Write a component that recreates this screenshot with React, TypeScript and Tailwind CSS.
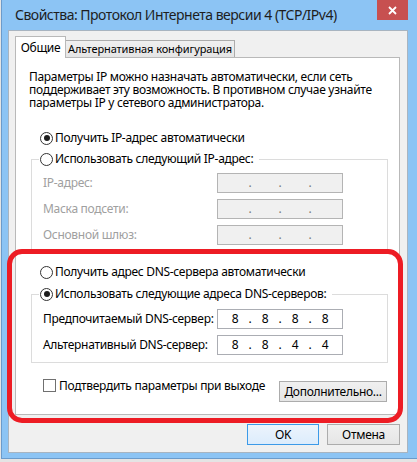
import React from "react";

// Windows 8 "IPv4 properties" dialog with a red marker drawn round the DNS part.

const UI = "font-['Segoe_UI','Noto_Sans',sans-serif] tracking-[-0.3px]";

function Radio({ checked, label }: { checked?: boolean; label: string }) {
  return (
    <div className="flex h-[16px] items-center">
      <span className="flex h-[13px] w-[13px] shrink-0 items-center justify-center rounded-full border border-[#333333] bg-white">
        {checked ? <span className="h-[6px] w-[6px] rounded-full bg-[#1c1c1c]" /> : null}
      </span>
      <span className="ml-[2px] whitespace-nowrap text-[12px] leading-[16px] text-black">{label}</span>
    </div>
  );
}

function IpBox({ value, disabled }: { value?: string[]; disabled?: boolean }) {
  const segs = value ?? ["", "", "", ""];
  return (
    <div
      className={
        disabled
          ? "flex h-[20px] w-[126px] items-center border border-[#b4b4b4] bg-[#f0f0f0] pl-[5px] text-[12px] leading-[18px] text-[#7a7a7a]"
          : "flex h-[20px] w-[126px] items-center border border-[#abadb3] bg-white pl-[5px] text-[12px] leading-[18px] text-black"
      }
    >
      {segs.map((s, i) => (
        <React.Fragment key={i}>
          <span className="w-[24px] text-center">{s}</span>
          {i < 3 ? <span className="w-[6px] text-center">.</span> : null}
        </React.Fragment>
      ))}
    </div>
  );
}

function Row({ label, value, disabled }: { label: string; value?: string[]; disabled?: boolean }) {
  return (
    <div className="flex items-center pl-[11px]">
      <span
        className={
          disabled
            ? "w-[174px] whitespace-nowrap text-[12px] leading-[16px] text-[#a0a0a0]"
            : "w-[174px] whitespace-nowrap text-[12px] leading-[16px] text-black"
        }
      >
        {label}
      </span>
      <IpBox value={value} disabled={disabled} />
    </div>
  );
}

function Button({ children, width, primary }: { children: React.ReactNode; width: string; primary?: boolean }) {
  return (
    <div
      className={`flex h-[21px] items-center justify-center whitespace-nowrap border text-[12px] text-black ${width} ${
        primary
          ? "border-[#3c9ae8] bg-[linear-gradient(#ecf4fc,#dcecfc)]"
          : "border-[#acacac] bg-[linear-gradient(#f0f0f0,#e5e5e5)]"
      }`}
    >
      {children}
    </div>
  );
}

export default function App() {
  return (
    <div className={`relative h-[462px] w-[417px] overflow-hidden bg-[#e4e4e4] ${UI}`}>
      <div className="ml-[1px] h-[459px] border-b border-l border-[#6b9bcb] bg-[#8cc4f4]">
        {/* title bar */}
        <div className="flex h-[30px]">
          <span className="whitespace-nowrap pl-[13px] text-[14px] leading-[30px] tracking-[-0.5px] text-[#1e1e1e]">
            Свойства: Протокол Интернета версии 4 (TCP/IPv4)
          </span>
          <div className="ml-auto mr-[9px] flex h-[20px] w-[31px] items-center justify-center bg-[#c75050]">
            <svg width="9" height="9" viewBox="0 0 9 9">
              <path d="M1 1 L8 8 M8 1 L1 8" stroke="#ffffff" strokeWidth="1.8" />
            </svg>
          </div>
        </div>

        {/* client area */}
        <div className="ml-[6px] mr-[9px] h-[423px] border border-[#a8b4c0] bg-[#f0f0f0] pl-[6px] pr-[7px] pt-[5px]">
          <div className="flex h-[21px] items-end">
            <div className="relative z-10 -mb-px flex h-[22px] w-[51px] items-center justify-center whitespace-nowrap border-l border-r border-t border-[#b9b9b9] bg-white pt-[1px] text-[12px] text-black">
              Общие
            </div>
            <div className="-ml-px flex h-[17px] w-[170px] items-center justify-center whitespace-nowrap border-l border-r border-t border-[#acacac] bg-[linear-gradient(#f0f0f0,#e5e5e5)] text-[11px] tracking-[-0.1px] text-black">
              Альтернативная конфигурация
            </div>
          </div>

          <div className="h-[358px] border border-[#b9b9b9] bg-white">
            <p className="pl-[13px] pt-[12px] text-[12px] leading-[13px] text-black">
              Параметры IP можно назначать автоматически, если сеть
              <br />
              поддерживает эту возможность. В противном случае узнайте
              <br />
              параметры IP у сетевого администратора.
            </p>

            <div className="mt-[21px] pl-[24px]">
              <Radio checked label="Получить IP-адрес автоматически" />
            </div>

            <fieldset className="ml-[15px] mr-[11px] mt-[5px] border border-[#dcdcdc] pb-[8px]">
              <legend className="ml-[7px] pl-[1px] pr-[6px]">
                <Radio label="Использовать следующий IP-адрес:" />
              </legend>
              <div className="mt-[6px] flex flex-col gap-[6px]">
                <Row label="IP-адрес:" disabled />
                <Row label="Маска подсети:" disabled />
                <Row label="Основной шлюз:" disabled />
              </div>
            </fieldset>

            <div className="mt-[10px] pl-[24px]">
              <Radio label="Получить адрес DNS-сервера автоматически" />
            </div>

            <fieldset className="ml-[15px] mr-[11px] mt-[6px] border border-[#dcdcdc] pb-[7px]">
              <legend className="ml-[7px] pl-[1px] pr-[6px]">
                <Radio checked label="Использовать следующие адреса DNS-серверов:" />
              </legend>
              <div className="mt-[7px] flex flex-col gap-[6px]">
                <Row label="Предпочитаемый DNS-сервер:" value={["8", "8", "8", "8"]} />
                <Row label="Альтернативный DNS-сервер:" value={["8", "8", "4", "4"]} />
              </div>
            </fieldset>

            <div className="mt-[16px] flex items-start justify-between pl-[27px] pr-[12px]">
              <div className="flex items-center">
                <span className="h-[13px] w-[13px] border border-[#707070] bg-white" />
                <span className="ml-[3px] whitespace-nowrap text-[12px] leading-[13px] text-black">
                  Подтвердить параметры при выходе
                </span>
              </div>
              <div className="mt-[2px]">
                <Button width="w-[108px]">Дополнительно...</Button>
              </div>
            </div>
          </div>

          <div className="mt-[9px] flex justify-end gap-[8px]">
            <Button width="w-[72px]" primary>
              OK
            </Button>
            <Button width="w-[73px]">Отмена</Button>
          </div>
        </div>
      </div>

      {/* red marker */}
      <div className="pointer-events-none absolute left-[7px] top-[249px] h-[174px] w-[396px] rounded-[15px] border-[5px] border-[#ed1c24]" />
    </div>
  );
}
